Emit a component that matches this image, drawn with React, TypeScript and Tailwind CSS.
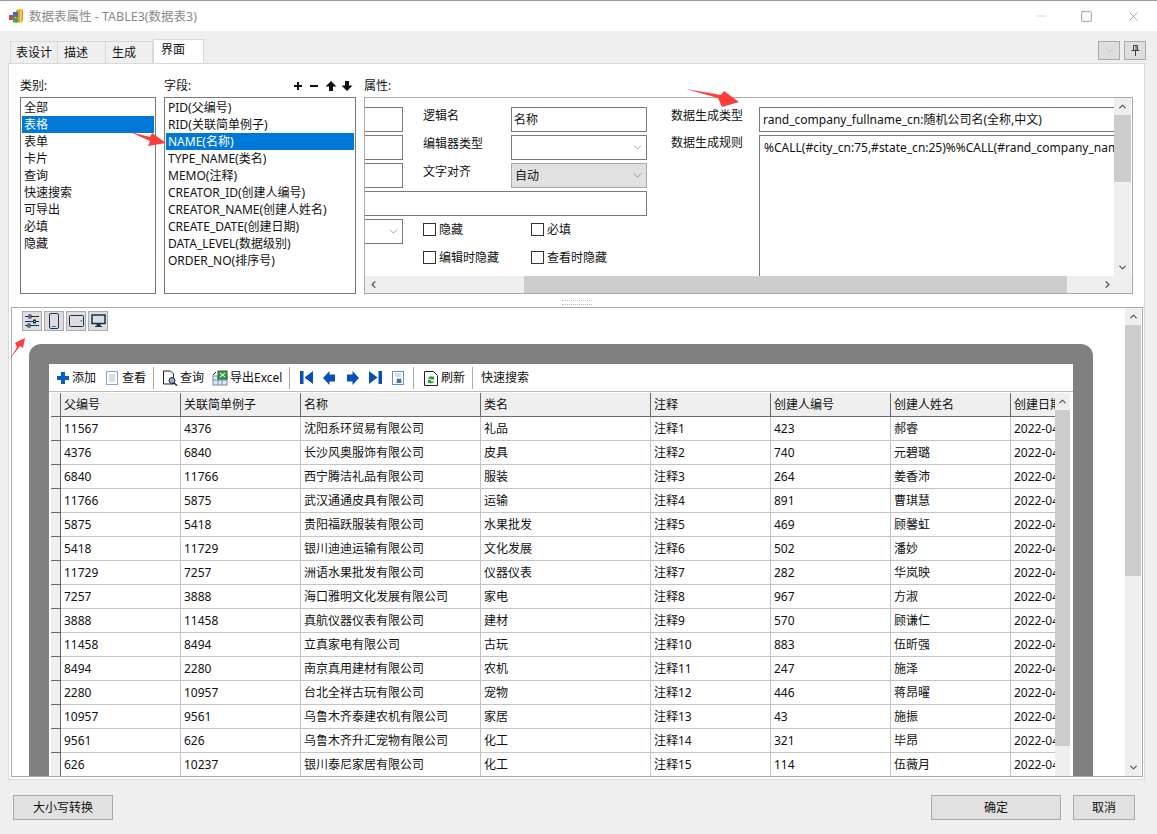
import React from "react";
import { ChevronDown, ChevronUp, ChevronLeft, ChevronRight, Minus, Square, X } from "lucide-react";

const categories = ["全部", "表格", "表单", "卡片", "查询", "快速搜索", "可导出", "必填", "隐藏"];
const fields = ["PID(父编号)", "RID(关联简单例子)", "NAME(名称)", "TYPE_NAME(类名)", "MEMO(注释)", "CREATOR_ID(创建人编号)", "CREATOR_NAME(创建人姓名)", "CREATE_DATE(创建日期)", "DATA_LEVEL(数据级别)", "ORDER_NO(排序号)"];
const headers = ["父编号", "关联简单例子", "名称", "类名", "注释", "创建人编号", "创建人姓名", "创建日期"];
const rows = [
  ["11567", "4376", "沈阳系环贸易有限公司", "礼品", "注释1", "423", "郝睿"],
  ["4376", "6840", "长沙风奥服饰有限公司", "皮具", "注释2", "740", "元碧璐"],
  ["6840", "11766", "西宁腾洁礼品有限公司", "服装", "注释3", "264", "姜香沛"],
  ["11766", "5875", "武汉通通皮具有限公司", "运输", "注释4", "891", "曹琪慧"],
  ["5875", "5418", "贵阳福跃服装有限公司", "水果批发", "注释5", "469", "顾馨虹"],
  ["5418", "11729", "银川迪迪运输有限公司", "文化发展", "注释6", "502", "潘妙"],
  ["11729", "7257", "洲语水果批发有限公司", "仪器仪表", "注释7", "282", "华岚映"],
  ["7257", "3888", "海口雅明文化发展有限公司", "家电", "注释8", "967", "方淑"],
  ["3888", "11458", "真航仪器仪表有限公司", "建材", "注释9", "570", "顾谦仁"],
  ["11458", "8494", "立真家电有限公司", "古玩", "注释10", "883", "伍昕强"],
  ["8494", "2280", "南京真用建材有限公司", "农机", "注释11", "247", "施泽"],
  ["2280", "10957", "台北全祥古玩有限公司", "宠物", "注释12", "446", "蒋昂曜"],
  ["10957", "9561", "乌鲁木齐泰建农机有限公司", "家居", "注释13", "43", "施振"],
  ["9561", "626", "乌鲁木齐升汇宠物有限公司", "化工", "注释14", "321", "毕昂"],
  ["626", "10237", "银川泰尼家居有限公司", "化工", "注释15", "114", "伍薇月"],
];
const widths = ["w-[120px]", "w-[120px]", "w-[180px]", "w-[170px]", "w-[120px]", "w-[120px]", "w-[120px]", "w-[46px]"];

function Input({ className = "", children }: { className?: string; children?: React.ReactNode }) {
  return <div className={`h-[25px] shrink-0 border border-[#7a7a7a] bg-white flex items-center px-[2px] ${className}`}>{children}</div>;
}

function Check({ label }: { label: string }) {
  return (
    <div className="flex items-center gap-[3px] h-[17px]">
      <div className="w-[13px] h-[13px] border border-[#333] bg-white" />
      <span>{label}</span>
    </div>
  );
}

function TbSep({ ml, mr }: { ml: string; mr: string }) {
  return <div className={`w-px h-[22px] bg-[#aaa] shrink-0 ${ml} ${mr}`} />;
}

function TogBtn({ children }: { children: React.ReactNode }) {
  return <div className="w-[20px] h-[20px] bg-[#dedede] border border-[#aaa] flex items-center justify-center">{children}</div>;
}

function ScrollV({ className = "", thumb, noDown }: { className?: string; thumb: string; noDown?: boolean }) {
  return (
    <div className={`flex flex-col bg-[#efefef] shrink-0 ${className}`}>
      <div className="h-[17px] flex items-center justify-center shrink-0"><ChevronUp size={11} strokeWidth={3} color="#606060" /></div>
      <div className="flex-1 min-h-0 overflow-hidden"><div className={`bg-[#cdcdcd] ${thumb}`} /></div>
      {!noDown && <div className="h-[17px] flex items-center justify-center shrink-0"><ChevronDown size={11} strokeWidth={3} color="#606060" /></div>}
    </div>
  );
}

function PropRow({ label, children }: { label: string; children: React.ReactNode }) {
  return (
    <div className="h-[25px] flex shrink-0">
      <Input className="w-[38px] border-l-0" />
      <span className="ml-[20px] w-[88px] whitespace-nowrap">{label}</span>
      {children}
    </div>
  );
}

export default function App() {
  return (
    <div className="w-[1157px] h-[834px] overflow-hidden bg-[#efefef] flex flex-col relative text-[12px] leading-[17px] text-[#111]" style={{ fontFamily: '"Noto Sans", "Noto Sans CJK SC", sans-serif' }}>
      {/* title bar */}
      <div className="h-[31px] shrink-0 bg-white border-t border-[#999] flex items-center pl-[8px]">
        <svg width="16" height="14" viewBox="0 0 16 14" className="mr-[5px]">
          <path d="M8 1l5-1 2 1v11l-2 1.500H8z" fill="#e8a020" />
          <path d="M12 1h1.500v12H12z" fill="#f6d36a" />
          <rect x="1" y="6" width="5" height="5" fill="#d8453a" />
          <rect x="5" y="3" width="5" height="5" fill="#3b6fc9" />
          <rect x="5" y="8.500" width="5" height="5" fill="#4aa84a" />
        </svg>
        <span className="text-[#8a8a8a] text-[12.5px]">数据表属性 - TABLE3(数据表3)</span>
        <div className="ml-auto flex items-center">
          <Minus size={14} color="#d8d8d8" className="mr-[32px]" />
          <Square size={13} color="#707070" strokeWidth={1.2} className="mr-[33px]" />
          <X size={15} color="#808080" strokeWidth={1} className="mr-[16px]" />
        </div>
      </div>
      {/* tab row */}
      <div className="h-[32px] shrink-0 flex items-end pl-[10px] pr-[11px] relative">
        <div className="h-[22px] w-[48px] border border-b-0 border-[#d9d9d9] flex items-center justify-center">表设计</div>
        <div className="h-[22px] w-[48px] border border-l-0 border-b-0 border-[#d9d9d9] flex items-center pl-[6px]">描述</div>
        <div className="h-[22px] w-[47px] border border-l-0 border-b-0 border-[#d9d9d9] flex items-center pl-[6px]">生成</div>
        <div className="h-[24px] w-[51px] bg-white border border-b-0 border-[#d9d9d9] flex items-start pl-[7px] pt-[1px]">界面</div>
        <div className="ml-auto flex gap-[4px] mb-[3px]">
          <div className="w-[22px] h-[19px] bg-[#dedede] border border-[#aaa] flex items-center justify-center"><ChevronDown size={13} color="#aaa" strokeWidth={1} /></div>
          <div className="w-[22px] h-[19px] bg-[#dedede] border border-[#aaa] flex items-center justify-center">
            <svg width="9" height="11" viewBox="0 0 9 11" fill="none" stroke="#444"><path d="M2.500.5h4v5h-4zM5 .5v5M.5 5.500h8M4.500 6v5" /></svg>
          </div>
        </div>
      </div>
      {/* tab body */}
      <div className="ml-[8px] w-[1137px] h-[717px] shrink-0 bg-white border border-[#d9d9d9] flex flex-col">
        {/* upper */}
        <div className="h-[233px] shrink-0 flex pl-[11px] pt-[13px] gap-[8px] bg-white">
          <div className="w-[136px] flex flex-col">
            <div className="h-[20px]">类别:</div>
            <div className="h-[197px] border border-[#7a7a7a] p-[1px] overflow-hidden">
              {categories.map((c, i) => (
                <div key={c} className={`h-[17px] pl-[2px] ${i === 1 ? "bg-[#0078d7] text-white" : ""}`}>{c}</div>
              ))}
            </div>
          </div>
          <div className="w-[192px] flex flex-col">
            <div className="h-[20px] flex items-start justify-between pr-[2px]">
              <span>字段:</span>
              <svg width="60" height="14" viewBox="0 0 60 14" className="mt-[2px]">
                <path d="M0 7h8M4 3v8M16 7h8" stroke="#111" strokeWidth="2" fill="none" />
                <path d="M37 2l5.500 5.500h-3.500v4.500h-4V7.500H31.500zM53 12l-5.500-5.500H51V2h4v4.500h3.500z" fill="#111" />
              </svg>
            </div>
            <div className="h-[197px] border border-[#7a7a7a] p-[1px] overflow-hidden">
              {fields.map((f, i) => (
                <div key={f} className={`h-[17px] pl-[2px] ${i === 2 ? "bg-[#0078d7] text-white" : ""}`}>{f}</div>
              ))}
            </div>
          </div>
          <div className="w-[769px] flex flex-col">
            <div className="h-[20px]">属性:</div>
            <div className="h-[197px] border border-[#aaa] flex flex-col overflow-hidden">
              <div className="flex-1 min-h-0 flex">
                <div className="w-[749px] flex min-h-0 overflow-hidden pt-[9px]">
                  <div className="w-[282px] shrink-0 flex flex-col gap-[3px]">
                    <PropRow label="逻辑名"><Input className="w-[136px]">名称</Input></PropRow>
                    <PropRow label="编辑器类型"><Input className="w-[136px] justify-end"><ChevronDown size={13} strokeWidth={1} color="#555" /></Input></PropRow>
                    <PropRow label="文字对齐"><Input className="w-[136px] !bg-[#e1e1e1] !border-[#aaa] justify-between pl-[3px]">自动<ChevronDown size={13} strokeWidth={1} color="#555" /></Input></PropRow>
                    <Input className="w-[282px] border-l-0" />
                    <div className="h-[25px] flex shrink-0">
                      <Input className="w-[38px] border-l-0 justify-end"><ChevronDown size={13} strokeWidth={1} color="#555" /></Input>
                      <div className="ml-[20px] w-[108px] pt-[2px]"><Check label="隐藏" /></div>
                      <div className="pt-[2px]"><Check label="必填" /></div>
                    </div>
                    <div className="h-[25px] flex shrink-0 pl-[58px]">
                      <div className="w-[108px] pt-[2px]"><Check label="编辑时隐藏" /></div>
                      <div className="pt-[2px]"><Check label="查看时隐藏" /></div>
                    </div>
                  </div>
                  <div className="w-[88px] shrink-0 ml-[24px] flex flex-col gap-[10px]">
                    <span className="whitespace-nowrap">数据生成类型</span>
                    <span className="whitespace-nowrap">数据生成规则</span>
                  </div>
                  <div className="flex flex-col flex-1 min-w-0 gap-[3px]">
                    <Input className="border-r-0 whitespace-nowrap pl-[3px]">rand_company_fullname_cn:随机公司名(全称,中文)</Input>
                    <div className="flex-1 border border-r-0 border-b-0 border-[#7a7a7a] pl-[4px] pt-[3px] whitespace-nowrap overflow-hidden">%CALL(#city_cn:75,#state_cn:25)%%CALL(#rand_company_name_cn)%</div>
                  </div>
                </div>
                <ScrollV className="w-[17px]" thumb="h-[67px]" />
              </div>
              <div className="h-[17px] shrink-0 flex bg-[#efefef]">
                <div className="w-[17px] flex items-center justify-center"><ChevronLeft size={11} strokeWidth={3} color="#606060" /></div>
                <div className="w-[142px]" />
                <div className="w-[543px] bg-[#cdcdcd]" />
                <div className="flex-1" />
                <div className="w-[34px] flex items-center justify-start pl-[4px]"><ChevronRight size={11} strokeWidth={3} color="#606060" /></div>
              </div>
            </div>
          </div>
        </div>
        {/* splitter */}
        <div className="h-[10px] shrink-0 flex items-center justify-center">
          <div className="w-[30px] h-[5px] border-y border-dotted border-[#bbb]" />
        </div>
        {/* lower */}
        <div className="ml-[2px] mr-[1px] h-[470px] shrink-0 border border-[#aaa] flex overflow-hidden bg-white">
          <div className="flex-1 min-w-0 overflow-hidden">
            <div className="flex gap-[2px] pl-[10px] pt-[3px] h-[36px]">
              <TogBtn>
                <svg width="14" height="14" viewBox="0 0 14 14" fill="none" stroke="#1a2f4f" strokeWidth="1"><path d="M0 2.500h14M0 7.500h14M0 11.500h14" /><rect x="4" y="1" width="2" height="3" fill="#dedede" /><rect x="8.500" y="6" width="2" height="3" fill="#dedede" /><rect x="3" y="10" width="2" height="3" fill="#dedede" /></svg>
              </TogBtn>
              <TogBtn>
                <svg width="10" height="16" viewBox="0 0 10 16" fill="none"><rect x=".5" y=".5" width="9" height="15" rx="1.500" stroke="#1a2f4f" /><path d="M3 13.500h4" stroke="#2a78c8" /></svg>
              </TogBtn>
              <TogBtn>
                <svg width="15" height="12" viewBox="0 0 15 12" fill="none"><rect x=".5" y=".5" width="14" height="11" rx="1" stroke="#1a2f4f" /><rect x="11.500" y="5" width="1.500" height="1.500" fill="#777" /></svg>
              </TogBtn>
              <TogBtn>
                <svg width="15" height="14" viewBox="0 0 15 14"><path d="M1 1h13v8.500H1z" fill="none" stroke="#1a2f4f" strokeWidth="1.500" /><path d="M6 9.500h3V12H6zM4 12.500h7" stroke="#1a2f4f" fill="#1a2f4f" /></svg>
              </TogBtn>
            </div>
            <div className="ml-[17px] w-[1064px] h-[432px] bg-[#808080] rounded-t-[12px] pt-[20px] px-[20px]">
              <div className="bg-white h-full flex flex-col">
                <div className="h-[28px] shrink-0 flex items-center pl-[8px] border-b border-[#bbb]">
                  <svg width="12" height="12" viewBox="0 0 12 12" className="shrink-0"><path d="M4 0h4v4h4v4H8v4H4V8H0V4h4z" fill="#0a5fc0" /></svg>
                  <span className="ml-[3px]">添加</span>
                  <svg width="12" height="14" viewBox="0 0 12 14" className="ml-[10px] shrink-0"><rect x=".5" y=".5" width="11" height="13" fill="#fff" stroke="#7aa7d8" /><path d="M3 4h6M3 6h6M3 8h6M3 10h6" stroke="#bbb" /></svg>
                  <span className="ml-[4px]">查看</span>
                  <TbSep ml="ml-[7px]" mr="mr-[8px]" />
                  <svg width="16" height="16" viewBox="0 0 16 16" className="shrink-0"><path d="M1.500 1h7l3 3v10h-10z" fill="#fff" stroke="#222" /><circle cx="10" cy="10.500" r="3" fill="#9ad" stroke="#222" /><path d="M12 13l3 2.500" stroke="#222" strokeWidth="1.500" /></svg>
                  <span className="ml-[2px] mr-[8px]">查询</span>
                  <svg width="16" height="16" viewBox="0 0 16 16" className="shrink-0"><rect x="1" y="6" width="14" height="9" fill="#dfe8f5" stroke="#6d8db5" /><path d="M1 10h14M6 6v9M10 6v9" stroke="#6d8db5" /><rect x="6" y="1" width="9" height="8" fill="#3d9a4a" stroke="#2c6e36" /><path d="M8 3l5 4M13 3l-5 4" stroke="#fff" /><path d="M1 5l3-3" stroke="#222" /></svg>
                  <span className="ml-[2px] w-[53px] whitespace-nowrap">导出Excel</span>
                  <TbSep ml="ml-[6px]" mr="mr-[10px]" />
                  <svg width="13" height="13" viewBox="0 0 13 13" className="shrink-0"><path d="M0 0h3.500v13H0zM13 0v13L4.500 6.500z" fill="#0a4fb5" /></svg>
                  <svg width="12" height="14" viewBox="0 0 12 14" className="ml-[10px] shrink-0"><path d="M0 7L6.500 0v3.500H12v7H6.500V14z" fill="#0a4fb5" /></svg>
                  <svg width="12" height="14" viewBox="0 0 12 14" className="ml-[12px] shrink-0"><path d="M12 7L5.500 0v3.500H0v7h5.500V14z" fill="#0a4fb5" /></svg>
                  <svg width="13" height="13" viewBox="0 0 13 13" className="ml-[10px] shrink-0"><path d="M0 0v13l8.500-6.500zM9.500 0H13v13H9.500z" fill="#0a4fb5" /></svg>
                  <svg width="12" height="14" viewBox="0 0 12 14" className="ml-[10px] shrink-0"><rect x=".5" y=".5" width="11" height="13" fill="#fff" stroke="#5a94d0" /><path d="M3 3h6M3 5h6" stroke="#bbb" /><path d="M6 7.500v4.500M8 7.500v4.500M4.500 9h5M4.500 11h5" stroke="#0a3f90" /></svg>
                  <TbSep ml="ml-[9px]" mr="mr-[10px]" />
                  <svg width="14" height="16" viewBox="0 0 14 16" className="shrink-0"><path d="M.5 1.500h9l4 4v10H.5z" fill="#fff" stroke="#222" /><path d="M4 9a3 3 0 0 1 5-2l1-1v3.500H6.500l1-1a2 2 0 0 0-2 .5zM10 11a3 3 0 0 1-5 1.500l-1 1V10h3.500l-1 1a2 2 0 0 0 2.500 0z" fill="#1f9a2e" /></svg>
                  <span className="ml-[3px]">刷新</span>
                  <TbSep ml="ml-[7px]" mr="mr-[8px]" />
                  <span>快速搜索</span>
                </div>
                <div className="flex-1 min-h-0 flex pl-[2px] pr-[3px] pt-[1px] overflow-hidden">
                  <div className="flex-1 min-w-0 overflow-hidden">
                    <div className="flex h-[24px] bg-[#efefef]">
                      <div className="w-[10px] shrink-0 border-r border-b border-[#6a6a6a]" />
                      {headers.map((h, i) => (
                        <div key={h} className={`${widths[i]} shrink-0 pl-[3px] flex items-center border-b border-r border-[#6a6a6a] whitespace-nowrap overflow-hidden ${i === 7 ? "border-r-0" : ""}`}>{h}</div>
                      ))}
                    </div>
                    {rows.map((r) => (
                      <div key={r[0]} className="flex h-[24px]">
                        <div className="w-[10px] shrink-0 bg-[#efefef] border-r border-b border-[#6a6a6a]" />
                        {r.map((v, i) => (
                          <div key={i} className={`${widths[i]} shrink-0 pl-[3px] flex items-center border-b border-r border-[#c4c4c4] whitespace-nowrap overflow-hidden`}>{v}</div>
                        ))}
                        <div className="w-[46px] shrink-0 pl-[3px] flex items-center border-b border-[#c4c4c4] whitespace-nowrap overflow-hidden">2022-04-20</div>
                      </div>
                    ))}
                  </div>
                  <ScrollV className="w-[15px]" thumb="h-[336px]" noDown />
                </div>
              </div>
            </div>
          </div>
          <ScrollV className="w-[16px] mr-[1px]" thumb="h-[251px]" />
        </div>
      </div>
      {/* footer */}
      <div className="flex-1 flex items-start pt-[15px] pl-[13px] pr-[22px]">
        <div className="w-[100px] h-[25px] bg-[#e1e1e1] border border-[#aaa] flex items-center justify-center">大小写转换</div>
        <div className="ml-auto w-[130px] h-[25px] bg-[#e1e1e1] border border-[#aaa] flex items-center justify-center">确定</div>
        <div className="ml-[12px] w-[62px] h-[25px] bg-[#e1e1e1] border border-[#aaa] flex items-center justify-center">取消</div>
      </div>
      {/* annotation arrows */}
      <svg className="absolute left-[130px] top-[130px]" width="37" height="18" viewBox="0 0 37 18"><polygon points="0,2 20,7 22,3 36,13 18,16 20,11" fill="#ff3b3b" /></svg>
      <svg className="absolute left-[686px] top-[88px]" width="54" height="20" viewBox="0 0 54 20"><polygon points="0,1 35,7 38,3 53,14 36,19 32,10" fill="#ff3b3b" /></svg>
      <svg className="absolute left-[10px] top-[337px]" width="16" height="23" viewBox="0 0 16 23"><polygon points="0,22 7,10 5,6 15,1 13,11 10,9" fill="#ff3b3b" /></svg>
    </div>
  );
}
